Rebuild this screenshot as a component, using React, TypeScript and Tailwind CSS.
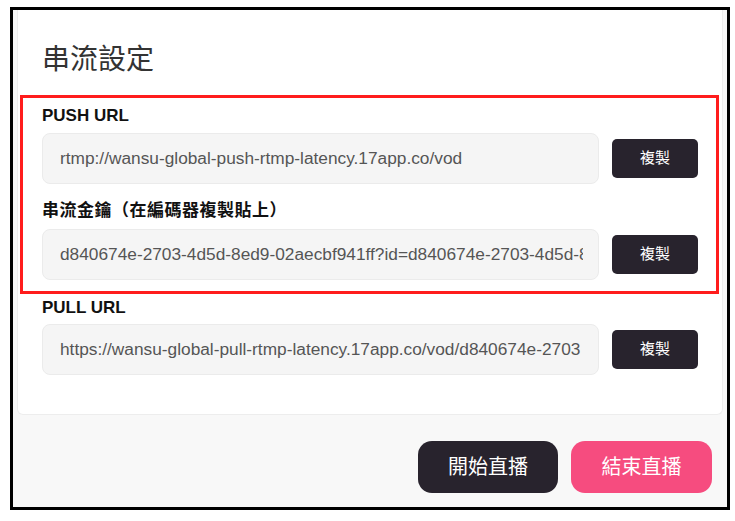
const font = "font-['Liberation_Sans','Noto_Sans_CJK_TC',sans-serif]";

function Field({ value }: { value: string }) {
  return (
    <div className="flex items-center gap-[13px]">
      <div className="flex h-[51px] min-w-0 flex-1 items-center rounded-lg border border-[#ebebeb] bg-[#f5f5f5] pl-[17px] pr-[15px]">
        <span className="min-w-0 flex-1 overflow-hidden whitespace-nowrap text-[17.3px] text-[#555]">
          {value}
        </span>
      </div>
      <button className="h-[39px] w-[86px] shrink-0 rounded-[5px] bg-[#28232d] text-[15px] text-white">
        複製
      </button>
    </div>
  );
}

function Label({ children, className = "" }: { children: React.ReactNode; className?: string }) {
  return (
    <div className={`text-[17px] font-bold leading-[20px] text-[#111] ${className}`}>{children}</div>
  );
}

export default function App() {
  return (
    <div className={`min-h-[521px] bg-white pl-[10px] pt-[7px] ${font}`}>
      <div className="flex h-[503px] w-[720px] flex-col border-[3px] border-black bg-[#f8f8f8]">
        {/* settings card */}
        <div className="mx-[4px] rounded-b-md border border-t-0 border-[#ededed] bg-white px-[24px] pb-[39px] pt-[32px]">
          <h2 className="text-[28px] leading-[36px] font-normal text-[#333]">串流設定</h2>

          {/* red annotation frame around push url + stream key */}
          <div className="mt-[17px] ml-[-22px] mr-[-21px] border-[3px] border-[#ff1c1c] pb-[11px] pl-[19px] pr-[18px] pt-[8px]">
            <Label className="mb-[7px]">PUSH URL</Label>
            <Field value="rtmp://wansu-global-push-rtmp-latency.17app.co/vod" />
            <Label className="mb-[8px] mt-[17px] tracking-[0.5px]">串流金鑰（在編碼器複製貼上）</Label>
            <Field value="d840674e-2703-4d5d-8ed9-02aecbf941ff?id=d840674e-2703-4d5d-8ed9-02aecbf941ff" />
          </div>

          <Label className="mb-[6px] mt-[4px]">PULL URL</Label>
          <Field value="https://wansu-global-pull-rtmp-latency.17app.co/vod/d840674e-2703" />
        </div>

        {/* footer actions */}
        <div className="flex justify-end gap-[13px] pr-[15px] pt-[26px]">
          <button className="h-[52px] w-[140px] rounded-[14px] bg-[#28232d] text-[20px] text-white">
            開始直播
          </button>
          <button className="h-[52px] w-[141px] rounded-[14px] bg-[#f64c7f] text-[20px] text-white">
            結束直播
          </button>
        </div>
      </div>
    </div>
  );
}
